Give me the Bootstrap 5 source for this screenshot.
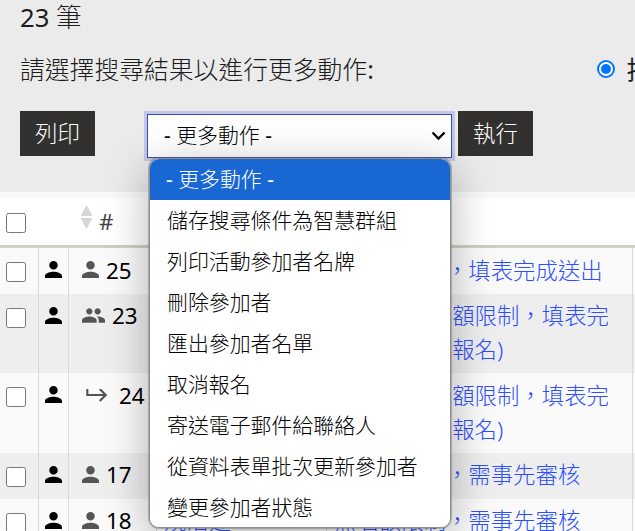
<!DOCTYPE html>
<html lang="zh-Hant">
<head>
<meta charset="utf-8">
<meta name="viewport" content="width=device-width, initial-scale=1">
<title>搜尋結果</title>
<link href="https://cdn.jsdelivr.net/npm/bootstrap@5.3.0/dist/css/bootstrap.min.css" rel="stylesheet">
<style>
html,body{overflow:hidden}
body{font-family:"Noto Sans","Noto Sans CJK TC",sans-serif;font-size:22.4px;line-height:33.7px;background:#fff;color:#000;height:531px}
.cjk{font-weight:300}
.num{font-weight:400}
.panel{background:#ebebeb;height:192px;padding-left:20px;color:#1c1c1c;font-size:24.8px;white-space:nowrap}
.total{height:36px;line-height:36px;font-size:25.6px}
.hint{height:38px;margin-top:14px;line-height:38px;overflow:hidden}
.choice{margin-left:223px}
.radio-on{width:18px;height:18px;border:2px solid #0075ff;border-radius:50%;background:#fff;padding:2px;display:block}
.radio-on::before{content:"";display:block;width:10px;height:10px;border-radius:50%;background:#0075ff}
.actions{margin-top:23px}
.btn-dark-flat,.btn-dark-flat:hover{width:75px;height:45px;border:0;border-radius:0;background:#32312f;color:#fff;font-size:22.4px;line-height:43px;padding:0 0 1px;font-weight:300}
.picker{width:305px;height:44px;margin:3px 6px 0 52px;border:1px solid #3f4db3;box-shadow:0 0 0 3px #c3c7e7;background:#fff;color:#000;font-size:20.9px;padding:0 5px 0 16px;position:relative}
.menu{position:absolute;z-index:5;left:1px;top:43px;width:302px;height:370px;border:1px solid #8f8f8f;border-radius:10px;background:#fff;overflow:hidden;box-shadow:0 0 0 1px rgba(100,100,100,.4),0 10px 44px rgba(0,0,0,.3)}
.menu .list-group-item{height:41px;flex:none;line-height:41px;padding:0 0 0 17px;border:0;border-radius:0;font-size:20.9px;font-weight:300;color:#000}
.menu .list-group-item.active{background:#1967d2;color:#fff;padding-left:16px}
.strip{height:6px;background:#f9f9f9}
.results{table-layout:fixed;width:635px;margin:0;--bs-table-bg:transparent;color:#000;border-collapse:separate;border-spacing:0}
.results th{height:50px;padding:0;border:0;border-bottom:3px solid #cfcfc3;font-weight:400;color:#444;vertical-align:middle}
.results td{padding:5.5px 7px 6.6px 7px;border:0;border-right:1px solid #d9d9d9;height:45.6px;vertical-align:top}
.results td:last-child{border-right:0;padding:0}
.results tr.odd td{background:#fafafa}
.results tr.even td{background:#eee}
.results a{color:#2c4fff;text-decoration:none}
.results input{width:20px;height:20px;margin:0;display:block}
.results th input{margin:3px 0 0 6px}
.results td.check{padding:14px 0 0 6px}
.results td.who{padding:13px 0 0 6px}
.results td.id{padding-left:13px;padding-right:0;white-space:nowrap}
.g{color:#555;margin-top:-1px}
.gap-id{padding-left:7px}
.sort{color:#d6d6d6;margin:-9px 6px 0 11px}
svg{display:block;fill:currentColor}
</style>
<script src="https://cdn.jsdelivr.net/npm/bootstrap@5.3.0/dist/js/bootstrap.bundle.min.js"></script>
</head>
<body>
<svg width="0" height="0" class="d-none">
<symbol id="person" viewBox="4 4 16 16"><path d="M12 12c2.2 0 4-1.800 4-4s-1.800-4-4-4-4 1.800-4 4 1.800 4 4 4zm0 2c-2.700 0-8 1.300-8 4v2h16v-2c0-2.700-5.300-4-8-4z"/></symbol>
<symbol id="people" viewBox="1 5 22 14"><path d="M16 11c1.660 0 2.990-1.340 2.990-3S17.660 5 16 5s-3 1.340-3 3 1.340 3 3 3zm-8 0c1.660 0 2.990-1.340 2.990-3S9.660 5 8 5 5 6.340 5 8s1.340 3 3 3zm0 2c-2.330 0-7 1.170-7 3.500V19h14v-2.500c0-2.330-4.670-3.500-7-3.500zm8 0c-.29 0-.62.02-.97.05 1.160.84 1.970 1.970 1.970 3.450V19h6v-2.500c0-2.330-4.670-3.500-7-3.500z"/></symbol>
<symbol id="turn" viewBox="0 0 19 12"><path d="M1 0v5.500h16M12.500 0l5.500 5.500-5.500 5.500" fill="none" stroke="currentColor" stroke-width="2"/></symbol>
</svg>
<div class="panel cjk">
  <div class="total"><span class="num">23</span> 筆</div>
  <div class="hint d-flex align-items-center"><span>請選擇搜尋結果以進行更多動作<span class="num">:</span></span><span class="choice d-flex align-items-center"><span class="radio-on"></span><b class="fw-normal ps-2 ms-1">按此</b></span></div>
  <div class="actions d-flex align-items-start">
    <button class="btn btn-dark-flat">列印</button>
    <div class="picker d-flex align-items-center justify-content-between">
      <span><span class="num">-</span> 更多動作 <span class="num">-</span></span>
      <svg width="15" height="10" viewBox="0 0 15 10"><path d="M1.500 1.500l6 6 6-6" fill="none" stroke="#000" stroke-width="2.300"/></svg>
      <div class="menu list-group">
        <div class="list-group-item active"><span class="num">-</span> 更多動作 <span class="num">-</span></div>
        <div class="list-group-item">儲存搜尋條件為智慧群組</div>
        <div class="list-group-item">列印活動參加者名牌</div>
        <div class="list-group-item">刪除參加者</div>
        <div class="list-group-item">匯出參加者名單</div>
        <div class="list-group-item">取消報名</div>
        <div class="list-group-item">寄送電子郵件給聯絡人</div>
        <div class="list-group-item">從資料表單批次更新參加者</div>
        <div class="list-group-item">變更參加者狀態</div>
      </div>
    </div>
    <button class="btn btn-dark-flat">執行</button>
  </div>
</div>
<div class="strip"></div>
<table class="table results cjk">
<colgroup><col style="width:39px"><col style="width:30px"><col style="width:88px"><col style="width:170px"><col style="width:306px"><col></colgroup>
<thead><tr><th><input type="checkbox"></th><th></th><th><div class="d-flex align-items-center"><svg class="sort" width="13" height="24" viewBox="0 0 13 24"><path d="M6.500 0l6 11h-12zM6.500 24l6-11h-12z"/></svg>#</div></th><th></th><th></th><th></th></tr></thead>
<tbody>
<tr class="odd"><td class="check"><input type="checkbox"></td><td class="who"><svg width="17" height="17"><use href="#person"/></svg></td><td class="id"><div class="d-flex align-items-center num"><svg class="g" width="17" height="17"><use href="#person"/></svg><span class="gap-id">25</span></div></td><td></td><td><a href="#">無名額限制，填表完成送出</a></td><td></td></tr>
<tr class="even"><td class="check"><input type="checkbox"></td><td class="who"><svg width="17" height="17"><use href="#person"/></svg></td><td class="id"><div class="d-flex align-items-center num"><svg class="g" width="23" height="15"><use href="#people"/></svg><span class="gap-id">23</span></div></td><td></td><td><a href="#">測試用(無名額限制，填表完成送出(線上報名)</a></td><td></td></tr>
<tr class="odd"><td class="check"><input type="checkbox"></td><td class="who"><svg width="17" height="17"><use href="#person"/></svg></td><td class="id"><div class="d-flex align-items-center num"><svg class="g ms-1" width="21" height="13"><use href="#turn"/></svg><span class="ps-2 ms-1">24</span></div></td><td></td><td><a href="#">測試用(無名額限制，填表完成送出(線上報名)</a></td><td></td></tr>
<tr class="even"><td class="check"><input type="checkbox"></td><td class="who"><svg width="17" height="17"><use href="#person"/></svg></td><td class="id"><div class="d-flex align-items-center num"><svg class="g" width="17" height="17"><use href="#person"/></svg><span class="gap-id">17</span></div></td><td></td><td><a href="#">無名額限制，需事先審核</a></td><td></td></tr>
<tr class="odd"><td class="check"><input type="checkbox"></td><td class="who"><svg width="17" height="17"><use href="#person"/></svg></td><td class="id"><div class="d-flex align-items-center num"><svg class="g" width="17" height="17"><use href="#person"/></svg><span class="gap-id">18</span></div></td><td><a href="#">規活建</a></td><td><a href="#">無名額限制，需事先審核</a></td><td></td></tr>
</tbody>
</table>
</body>
</html>
